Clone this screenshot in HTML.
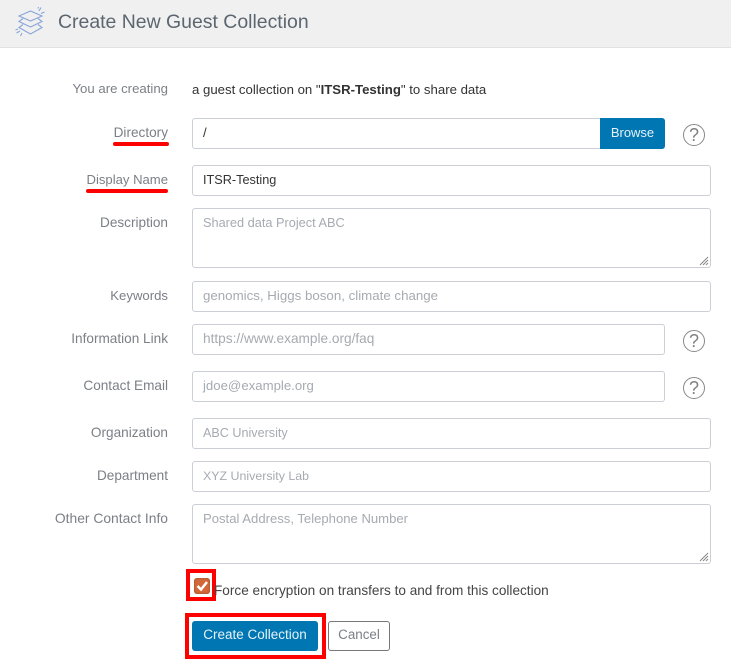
<!DOCTYPE html>
<html><head><meta charset="utf-8"><style>
html,body{margin:0;padding:0;background:#fff}
body{width:731px;height:668px;position:relative;overflow:hidden;font-family:"Liberation Sans",sans-serif;font-size:13.6px;color:#333}
.hdr{position:absolute;left:0;top:0;width:731px;height:47px;background:#f0f0f0;border-bottom:1px solid #e2e2e2}
.title{position:absolute;left:58px;top:10px;font-size:19.45px;line-height:24px;color:#5c6670;white-space:nowrap}
.l{position:absolute;right:563px;white-space:nowrap;color:#7b8087;line-height:18px}
.b{position:absolute;box-sizing:border-box;left:192px;width:519px;height:31px;border:1px solid #ccd0d6;border-radius:3px;background:#fff;padding:0 10px;line-height:27px;white-space:nowrap;color:#a6abb1;font-size:13.2px}
.s{width:473px}.t{height:60px;line-height:28px}
.v{color:#333;font-size:12.7px;line-height:29px}
.q{position:absolute;left:683px;width:22px;height:22px;box-sizing:border-box;border:1px solid #888;border-radius:50%;text-align:center;font-size:18px;line-height:21px;color:#808080}
.red{position:absolute;background:#f00;border-radius:2px;height:4px}
.rb{position:absolute;box-sizing:border-box;border:4px solid #f00}
.btn{position:absolute;box-sizing:border-box;text-align:center;border-radius:3px;white-space:nowrap}
.g{position:absolute;right:1px;bottom:1px}
</style></head><body>
<div class="hdr"></div>
<svg style="position:absolute;left:14px;top:6px" width="34" height="32" viewBox="0 0 34 32" fill="none" stroke="#8aa5d8" stroke-width="1.1">
<path d="M5 10L16.500 5L28 10L16.500 15Z"/>
<path d="M9 12.500L5 15.500L16.500 21L28 15.500L24 12.500"/>
<path d="M9 18.500L5 21.500L16.500 28L28 21.500L24 18.500"/>
<path d="M25 5L27 1.500M27 7.500L30.500 6M24 2.500L24.500 1M6 25L2.500 27M8 27L6.500 30M4 23L1.500 24"/>
</svg>
<div class="title">Create New Guest Collection</div>

<div class="l" style="top:80px;font-size:13.2px">You are creating</div>
<div style="position:absolute;left:192px;top:81px;line-height:18px;color:#333;white-space:nowrap;font-size:13.2px">a guest collection on "<b>ITSR-Testing</b>" to share data</div>

<div class="l" style="top:124px">Directory</div>
<div class="red" style="left:113px;top:141.500px;width:56px"></div>
<div class="b s" style="top:118px;color:#333">/</div>
<div class="btn" style="left:600px;top:118px;width:65px;height:31px;background:#0077b3;color:#e6f2f8;line-height:30px;border-radius:0 3px 3px 0;font-size:13px">Browse</div>
<div class="q" style="top:124px">?</div>

<div class="l" style="top:171px;font-size:13.1px">Display Name</div>
<div class="red" style="left:86px;top:188.500px;width:82px"></div>
<div class="b v" style="top:165px">ITSR-Testing</div>

<div class="l" style="top:214px">Description</div>
<div class="b t" style="top:208px;font-size:12.75px">Shared data Project ABC
<svg class="g" width="10" height="10" viewBox="0 0 10 10" stroke="#888" stroke-width="1"><path d="M9 1L1 9M9 4L4 9M9 7L7 9"/></svg></div>

<div class="l" style="top:287px;font-size:13.15px">Keywords</div>
<div class="b" style="top:281px;font-size:13.3px">genomics, Higgs boson, climate change</div>

<div class="l" style="top:330px">Information Link</div>
<div class="b s" style="top:324px;font-size:13.65px">https://www.example.org/faq</div>
<div class="q" style="top:330px">?</div>

<div class="l" style="top:377px">Contact Email</div>
<div class="b s" style="top:371px">jdoe@example.org</div>
<div class="q" style="top:377px">?</div>

<div class="l" style="top:424px">Organization</div>
<div class="b" style="top:418px;font-size:12.6px;line-height:29px">ABC University</div>

<div class="l" style="top:467px">Department</div>
<div class="b" style="top:461px;font-size:12.4px;line-height:29px">XYZ University Lab</div>

<div class="l" style="top:509px;font-size:13.85px">Other Contact Info</div>
<div class="b t" style="top:504px;font-size:13.1px">Postal Address, Telephone Number
<svg class="g" width="10" height="10" viewBox="0 0 10 10" stroke="#888" stroke-width="1"><path d="M9 1L1 9M9 4L4 9M9 7L7 9"/></svg></div>

<div class="rb" style="left:186px;top:569px;width:30px;height:32px"></div>
<div style="position:absolute;left:194px;top:578px;width:16px;height:16px;border-radius:3px;background:#d2683a;box-shadow:inset 0 0 2px #8a4a2c"></div>
<svg style="position:absolute;left:194px;top:578px" width="16" height="16" viewBox="0 0 16 16" fill="none" stroke="#fff" stroke-width="2.500"><path d="M3.500 8L7 11.500L13 4"/></svg>
<div style="position:absolute;left:214px;top:582px;line-height:18px;color:#444;white-space:nowrap;font-size:13.6px">Force encryption on transfers to and from this collection</div>

<div class="rb" style="left:185px;top:613px;width:141px;height:46px"></div>
<div class="btn" style="left:192px;top:621px;width:126px;height:30px;background:#0077b3;color:#e6f2f8;line-height:27px;font-size:13.5px">Create Collection</div>
<div class="btn" style="left:328px;top:621px;width:62px;height:30px;border:1px solid #777;color:#7b8087;line-height:25px;font-size:13.4px">Cancel</div>
</body></html>
